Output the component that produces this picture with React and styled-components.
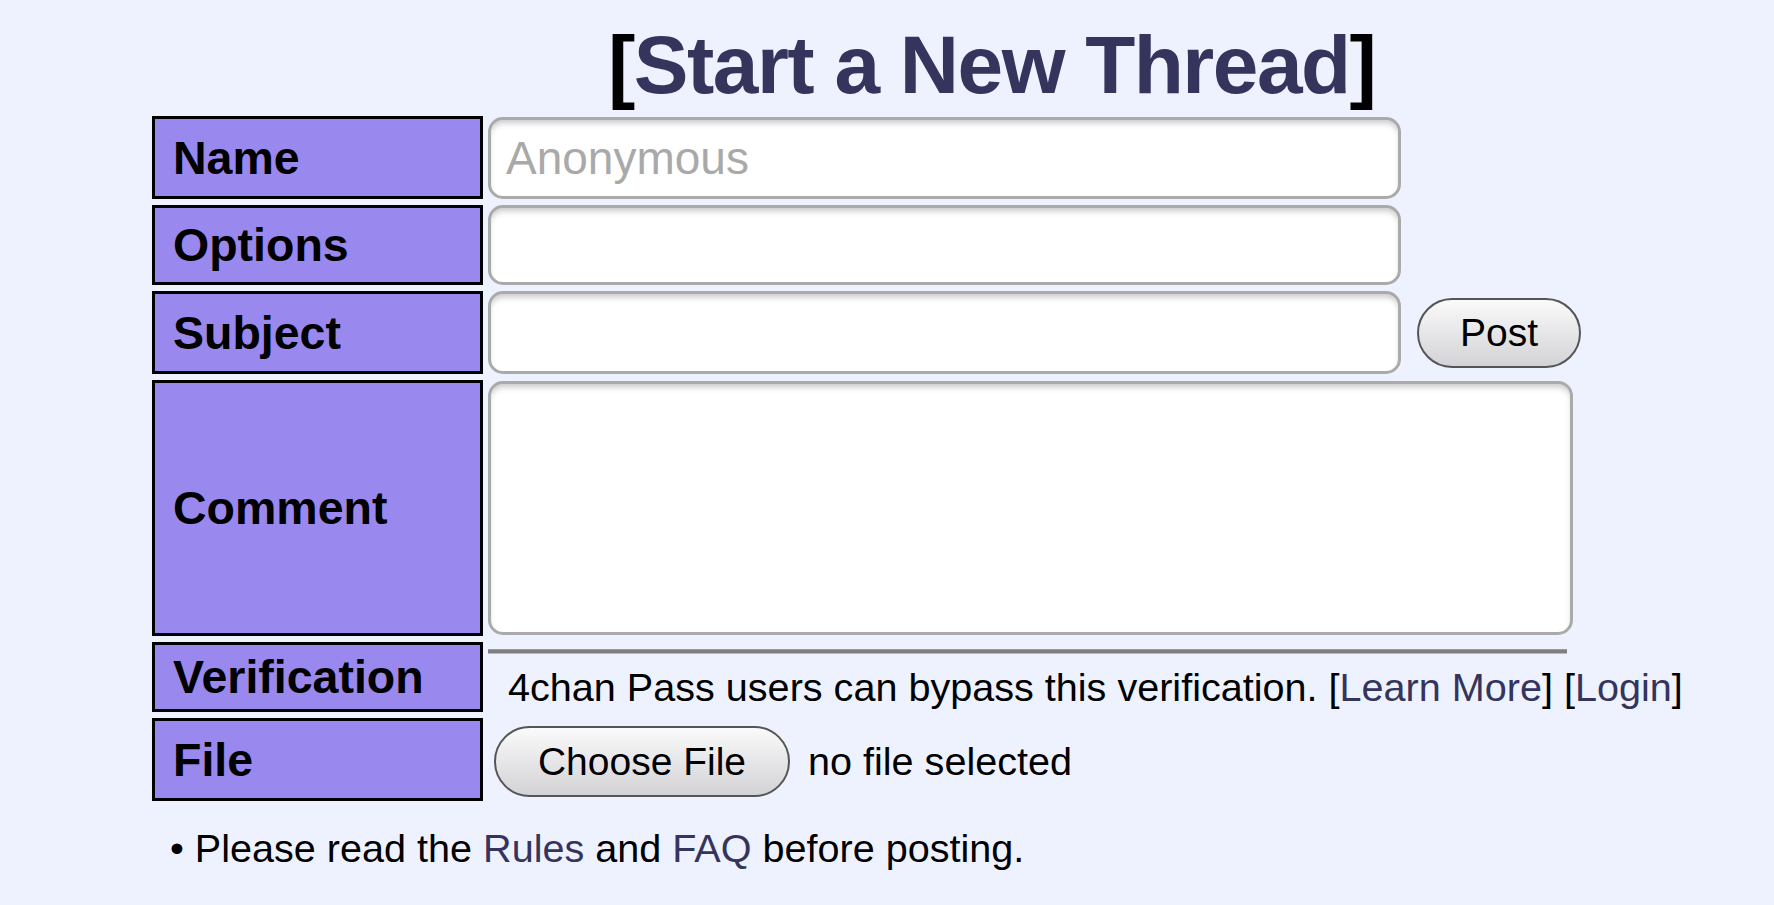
import React from "react";
import styled, { createGlobalStyle } from "styled-components";

const GlobalStyle = createGlobalStyle`
  html, body {
    margin: 0;
    padding: 0;
    background: #eef2ff;
    min-height: 100%;
  }
  body {
    font-family: "Liberation Sans", Arial, Helvetica, sans-serif;
    color: #000;
  }
`;

const Page = styled.div`
  min-height: 905px;
  box-sizing: border-box;
  padding-top: 24px;
`;

const Title = styled.h1`
  margin: 0;
  padding-left: 608px;
  font-size: 82px;
  line-height: 82px;
  font-weight: bold;
  letter-spacing: -1.5px;
  color: #000;
  white-space: nowrap;
`;

const TitleLink = styled.a`
  color: #34345c;
  text-decoration: none;
`;

const Form = styled.form`
  margin: 10px 0 0 152px;
  display: grid;
  grid-template-columns: 331px auto;
  column-gap: 5px;
  row-gap: 6px;
  justify-content: start;
`;

const Label = styled.div`
  box-sizing: border-box;
  height: ${(p) => p.$h}px;
  border: 3px solid #000;
  background: #9988ee;
  padding-left: 18px;
  display: flex;
  align-items: center;
  font-size: 46.5px;
  font-weight: bold;
  white-space: nowrap;
`;

const Field = styled.div`
  display: flex;
  align-items: ${(p) => (p.$column ? "stretch" : "center")};
  flex-direction: ${(p) => (p.$column ? "column" : "row")};
  gap: ${(p) => p.$gap || 0}px;
  height: ${(p) => p.$h}px;
`;

const TextInput = styled.input`
  box-sizing: border-box;
  width: 913px;
  height: 100%;
  margin: 0;
  border: 3px solid #aaa;
  border-radius: 15px;
  background: #fff;
  box-shadow: inset 0 5px 6px -2px rgba(0, 0, 0, 0.22);
  padding: 0 15px;
  font-family: inherit;
  font-size: 46px;
  color: #000;
  outline: none;
  &::placeholder {
    color: #a9a9a9;
  }
`;

const CommentBox = styled.textarea`
  box-sizing: border-box;
  width: 1085px;
  height: 100%;
  margin: 0;
  border: 3px solid #aaa;
  border-radius: 15px;
  background: #fff;
  box-shadow: inset 0 5px 6px -2px rgba(0, 0, 0, 0.22);
  padding: 10px 16px;
  font-family: inherit;
  font-size: 40px;
  resize: none;
  outline: none;
`;

const PillButton = styled.button`
  box-sizing: border-box;
  width: ${(p) => p.$w}px;
  height: ${(p) => p.$h}px;
  margin: 0;
  padding: 0;
  border: 2px solid #555;
  border-radius: 40px;
  background: linear-gradient(#fafafa, #d3d3d7);
  font-family: inherit;
  font-size: 39px;
  color: #000;
  flex-shrink: 0;
  cursor: pointer;
`;

const Rule = styled.div`
  height: 5px;
  margin-top: 7px;
  width: 1079px;
  background: #7f7f7f;
  border-top: 1px solid #9a9a9a;
  border-bottom: 1px solid #b8b8c0;
  box-sizing: border-box;
`;

const PassText = styled.div`
  margin-top: 10px;
  padding-left: 20px;
  font-size: 39.6px;
  line-height: 46px;
  white-space: nowrap;
`;

const Link = styled.a`
  color: #34345c;
  text-decoration: none;
`;

const FileStatus = styled.span`
  font-size: 39.6px;
  white-space: nowrap;
`;

const FileField = styled(Field)`
  padding-left: 6px;
  padding-top: 4px;
  box-sizing: border-box;
`;

const Note = styled.div`
  margin: 24px 0 0 170px;
  font-size: 39.6px;
  line-height: 46px;
  white-space: nowrap;
`;

export default function App() {
  return (
    <>
      <GlobalStyle />
      <Page>
        <Title>
          [<TitleLink href="#">Start a New Thread</TitleLink>]
        </Title>
        <Form onSubmit={(e) => e.preventDefault()}>
          <Label $h={83}>Name</Label>
          <Field $h={83}>
            <TextInput placeholder="Anonymous" style={{ height: 82, alignSelf: "flex-end" }} />
          </Field>

          <Label $h={80}>Options</Label>
          <Field $h={80}>
            <TextInput />
          </Field>

          <Label $h={83}>Subject</Label>
          <Field $h={83} $gap={16}>
            <TextInput />
            <PillButton type="submit" $w={164} $h={70}>
              Post
            </PillButton>
          </Field>

          <Label $h={256}>Comment</Label>
          <Field $h={256}>
            <CommentBox style={{ height: 254 }} />
          </Field>

          <Label $h={70}>Verification</Label>
          <Field $h={70} $column>
            <Rule />
            <PassText>
              4chan Pass users can bypass this verification. [<Link href="#">Learn More</Link>] [
              <Link href="#">Login</Link>]
            </PassText>
          </Field>

          <Label $h={83}>File</Label>
          <FileField $h={83} $gap={18}>
            <PillButton type="button" $w={296} $h={71}>
              Choose File
            </PillButton>
            <FileStatus>no file selected</FileStatus>
          </FileField>
        </Form>
        <Note>
          • Please read the <Link href="#">Rules</Link> and <Link href="#">FAQ</Link> before posting.
        </Note>
      </Page>
    </>
  );
}
